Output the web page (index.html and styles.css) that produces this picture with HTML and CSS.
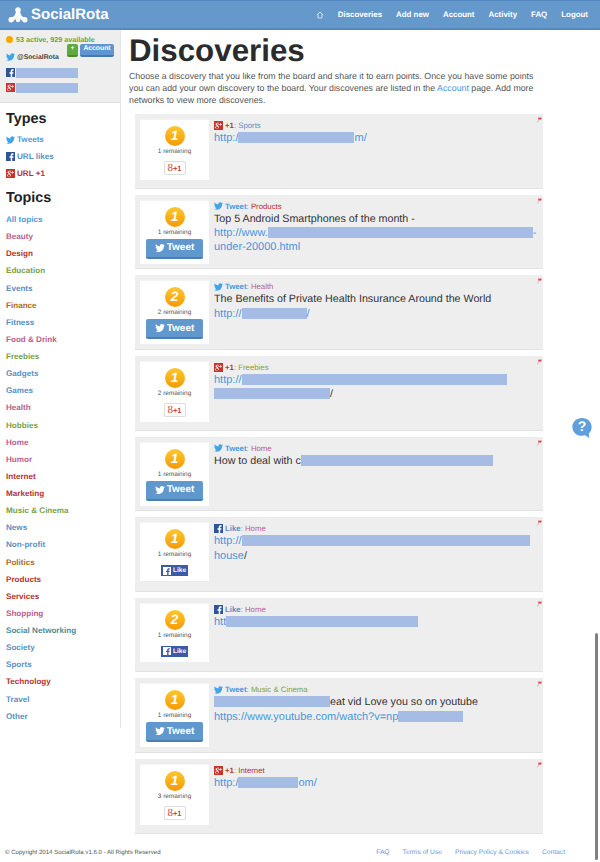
FILE: index.html
```html
<!DOCTYPE html>
<html lang="en">
<head>
<meta charset="utf-8">
<title>Discoveries - SocialRota</title>
<link rel="stylesheet" href="styles.css">
</head>
<body>
<svg class="defs" width="0" height="0" aria-hidden="true">
  <symbol id="tw" viewBox="0 0 24 20"><path d="M24 2.4c-.9.4-1.8.7-2.8.8 1-.6 1.8-1.6 2.2-2.7-1 .6-2 1-3.100 1.200C19.300.7 18 0 16.600 0c-2.700 0-4.900 2.200-4.900 4.900 0 .4 0 .8.100 1.100C7.700 5.800 4.100 3.900 1.700.9 1.200 1.600 1 2.500 1 3.400c0 1.700.9 3.200 2.200 4.100-.8 0-1.600-.2-2.200-.6v.1c0 2.400 1.700 4.400 3.900 4.800-.4.100-.8.200-1.300.2-.3 0-.6 0-.9-.1.600 2 2.400 3.400 4.600 3.400C5.600 17.100 3.500 17.900 1.200 17.900c-.4 0-.8 0-1.200-.1 2.200 1.400 4.800 2.200 7.500 2.200 9.100 0 14-7.500 14-14v-.6c1-.7 1.800-1.600 2.500-3z"/></symbol>
  <symbol id="fb" viewBox="0 0 16 16"><rect width="16" height="16" fill="#2f5597"/><path fill="#fff" d="M11 16V10h2l.4-2.500H11V6c0-.8.3-1.200 1.200-1.200h1.300V2.500C13 2.400 12.300 2.400 11.600 2.400 9.700 2.400 8.400 3.500 8.400 5.600v1.900H6.200V10h2.200v6z"/></symbol>
  <symbol id="fbw" viewBox="0 0 16 16"><rect width="16" height="16" fill="#fff"/><path fill="#3a5ba8" d="M11 16V10h2l.4-2.500H11V6c0-.8.3-1.200 1.200-1.200h1.300V2.500C13 2.400 12.300 2.400 11.600 2.400 9.700 2.400 8.400 3.500 8.400 5.600v1.900H6.200V10h2.200v6z"/></symbol>
  <symbol id="gp" viewBox="0 0 16 16"><rect width="16" height="16" fill="#c8342b"/><path fill="#fff" d="M6 3c-2 0-3.200 1.300-3.200 2.800 0 1.300 1 2.300 2.300 2.300-.2.500 0 .9.300 1.200-1.800 0-3.400.9-3.400 2.300 0 1.200 1.400 1.900 3.200 1.900 2.200 0 3.500-1.300 3.500-2.500 0-1.700-1.900-2-1.900-2.900 0-.7 1.500-1 1.500-2.700 0-.8-.3-1.300-.8-1.700h.9L9.300 3zm-.2.800c.9 0 1.500 1 1.500 2.100 0 .8-.4 1.300-1.100 1.300-1 0-1.500-1.100-1.500-2.100 0-.8.400-1.300 1.100-1.300zm.1 6c1 .3 1.800.9 1.800 1.800 0 .9-.8 1.500-2 1.500-1.300 0-2.300-.7-2.300-1.700 0-.9 1.100-1.600 2.500-1.600zM11 3.500v2H9v1h2v2h1v-2h2v-1h-2v-2z"/></symbol>
  <symbol id="pin" viewBox="0 0 8 8"><path fill="#e04848" d="M2.500 1 7.500.6 7 3.400 3.500 3.800z"/><path fill="#b9a08c" d="M3.500 3.800 1 7.500l.4.300 3-3.800z"/></symbol>
</svg>

<header class="topbar">
  <a class="brand" href="#">
    <svg class="logo" viewBox="0 0 22 18" aria-hidden="true"><g fill="#fff"><circle cx="11" cy="3.400" r="3.100"/><circle cx="3.300" cy="14.300" r="3"/><circle cx="18.700" cy="14.300" r="3"/><circle cx="11" cy="14.800" r="2.400"/><path d="M9 5h4l2.200 5 3.500 2.500-2 3-4.700-2.500h-2L5.300 15.500l-2-3L6.800 10z"/></g></svg>
    <span>SocialRota</span>
  </a>
  <nav class="nav">
    <a href="#" class="home"><svg viewBox="0 0 10 10" aria-hidden="true"><path fill="none" stroke="#e8f0f8" stroke-width="1" d="M1 5 5 1.200 9 5M2.500 4v4.700h5V4"/></svg></a>
    <a href="#">Discoveries</a><a href="#">Add new</a><a href="#">Account</a><a href="#">Activity</a><a href="#">FAQ</a><a href="#">Logout</a>
  </nav>
</header>

<div class="page">
  <aside class="side">
    <section class="profile">
      <div class="points"><i class="coin"></i><span>53 active, 929 available</span></div>
      <div class="acct-row">
        <svg class="ic ic-tw"><use href="#tw"/></svg><b>@SocialRota</b>
        <div class="acct-btns"><a class="mini green" href="#">+</a><a class="mini blue" href="#">Account</a></div>
      </div>
      <div class="net"><svg class="ic-sq"><use href="#fb"/></svg><span class="blk"></span></div>
      <div class="net"><svg class="ic-sq"><use href="#gp"/></svg><span class="blk"></span></div>
    </section>
    <section class="filters">
      <h2>Types</h2>
      <ul class="types">
        <li><svg class="ic ic-tw"><use href="#tw"/></svg><a class="c-sky" href="#">Tweets</a></li>
        <li><svg class="ic-sq"><use href="#fb"/></svg><a class="c-blue" href="#">URL likes</a></li>
        <li><svg class="ic-sq"><use href="#gp"/></svg><a class="c-red" href="#">URL +1</a></li>
      </ul>
      <h2 class="h-topics">Topics</h2>
      <ul class="topics">
        <li><a class="c-sky" href="#">All topics</a></li>
        <li><a class="c-pink" href="#">Beauty</a></li>
        <li><a class="c-red" href="#">Design</a></li>
        <li><a class="c-green" href="#">Education</a></li>
        <li><a class="c-blue" href="#">Events</a></li>
        <li><a class="c-orange" href="#">Finance</a></li>
        <li><a class="c-blue" href="#">Fitness</a></li>
        <li><a class="c-pink" href="#">Food &amp; Drink</a></li>
        <li><a class="c-green" href="#">Freebies</a></li>
        <li><a class="c-blue" href="#">Gadgets</a></li>
        <li><a class="c-blue" href="#">Games</a></li>
        <li><a class="c-pink" href="#">Health</a></li>
        <li><a class="c-green" href="#">Hobbies</a></li>
        <li><a class="c-pink" href="#">Home</a></li>
        <li><a class="c-pink" href="#">Humor</a></li>
        <li><a class="c-red" href="#">Internet</a></li>
        <li><a class="c-red" href="#">Marketing</a></li>
        <li><a class="c-green" href="#">Music &amp; Cinema</a></li>
        <li><a class="c-blue" href="#">News</a></li>
        <li><a class="c-blue" href="#">Non-profit</a></li>
        <li><a class="c-orange" href="#">Politics</a></li>
        <li><a class="c-red" href="#">Products</a></li>
        <li><a class="c-red" href="#">Services</a></li>
        <li><a class="c-pink" href="#">Shopping</a></li>
        <li><a class="c-teal" href="#">Social Networking</a></li>
        <li><a class="c-blue" href="#">Society</a></li>
        <li><a class="c-blue" href="#">Sports</a></li>
        <li><a class="c-red" href="#">Technology</a></li>
        <li><a class="c-blue" href="#">Travel</a></li>
        <li><a class="c-blue" href="#">Other</a></li>
      </ul>
    </section>
  </aside>

  <main class="main">
    <h1>Discoveries</h1>
    <p class="intro">Choose a discovery that you like from the board and share it to earn points. Once you have some points you can add your own discovery to the board. Your discoveries are listed in the <a href="#">Account</a> page. Add more networks to view more discoveries.</p>

    <div class="board">
      <article class="card">
        <div class="claim"><span class="badge">1</span><small>1 remaining</small><a class="plus" href="#"><b>8</b>+1</a></div>
        <div class="body">
          <div class="meta"><svg class="ic-sq"><use href="#gp"/></svg><b class="c-red">+1</b>: <span class="c-blue">Sports</span></div>
          <div class="line"><a href="#">http:/<span class="blk w116"></span>m/</a></div>
        </div>
        <svg class="pin"><use href="#pin"/></svg>
      </article>

      <article class="card">
        <div class="claim"><span class="badge">1</span><small>1 remaining</small><a class="tweet" href="#"><svg><use href="#tw"/></svg>Tweet</a></div>
        <div class="body">
          <div class="meta"><svg class="ic ic-tw"><use href="#tw"/></svg><b class="c-sky">Tweet</b>: <span class="c-red">Products</span></div>
          <div class="line">Top 5 Android Smartphones of the month -</div>
          <div class="line"><a href="#">http://www.<span class="blk w265"></span>-</a></div>
          <div class="line"><a href="#">under-20000.html</a></div>
        </div>
        <svg class="pin"><use href="#pin"/></svg>
      </article>

      <article class="card">
        <div class="claim"><span class="badge">2</span><small>2 remaining</small><a class="tweet" href="#"><svg><use href="#tw"/></svg>Tweet</a></div>
        <div class="body">
          <div class="meta"><svg class="ic ic-tw"><use href="#tw"/></svg><b class="c-sky">Tweet</b>: <span class="c-pink">Health</span></div>
          <div class="line">The Benefits of Private Health Insurance Around the World</div>
          <div class="line"><a href="#">http://<span class="blk w65"></span>/</a></div>
        </div>
        <svg class="pin"><use href="#pin"/></svg>
      </article>

      <article class="card">
        <div class="claim"><span class="badge">1</span><small>2 remaining</small><a class="plus" href="#"><b>8</b>+1</a></div>
        <div class="body">
          <div class="meta"><svg class="ic-sq"><use href="#gp"/></svg><b class="c-red">+1</b>: <span class="c-green">Freebies</span></div>
          <div class="line"><a href="#">http://<span class="blk w265"></span></a></div>
          <div class="line"><span class="blk w116"></span>/</div>
        </div>
        <svg class="pin"><use href="#pin"/></svg>
      </article>

      <article class="card">
        <div class="claim"><span class="badge">1</span><small>1 remaining</small><a class="tweet" href="#"><svg><use href="#tw"/></svg>Tweet</a></div>
        <div class="body">
          <div class="meta"><svg class="ic ic-tw"><use href="#tw"/></svg><b class="c-sky">Tweet</b>: <span class="c-pink">Home</span></div>
          <div class="line">How to deal with c<span class="blk w192"></span></div>
        </div>
        <svg class="pin"><use href="#pin"/></svg>
      </article>

      <article class="card">
        <div class="claim"><span class="badge">1</span><small>1 remaining</small><a class="like" href="#"><svg><use href="#fbw"/></svg>Like</a></div>
        <div class="body">
          <div class="meta"><svg class="ic-sq"><use href="#fb"/></svg><b class="c-blue">Like</b>: <span class="c-pink">Home</span></div>
          <div class="line"><a href="#">http://<span class="blk w288"></span></a></div>
          <div class="line"><a href="#">house</a>/</div>
        </div>
        <svg class="pin"><use href="#pin"/></svg>
      </article>

      <article class="card">
        <div class="claim"><span class="badge">2</span><small>1 remaining</small><a class="like" href="#"><svg><use href="#fbw"/></svg>Like</a></div>
        <div class="body">
          <div class="meta"><svg class="ic-sq"><use href="#fb"/></svg><b class="c-blue">Like</b>: <span class="c-pink">Home</span></div>
          <div class="line"><a href="#">htt<span class="blk w192"></span></a></div>
        </div>
        <svg class="pin"><use href="#pin"/></svg>
      </article>

      <article class="card">
        <div class="claim"><span class="badge">1</span><small>1 remaining</small><a class="tweet" href="#"><svg><use href="#tw"/></svg>Tweet</a></div>
        <div class="body">
          <div class="meta"><svg class="ic ic-tw"><use href="#tw"/></svg><b class="c-sky">Tweet</b>: <span class="c-green">Music &amp; Cinema</span></div>
          <div class="line"><span class="blk w116"></span>eat vid Love you so on youtube</div>
          <div class="line"><a href="#">https://www.youtube.com/watch?v=np<span class="blk w65"></span></a></div>
        </div>
        <svg class="pin"><use href="#pin"/></svg>
      </article>

      <article class="card">
        <div class="claim"><span class="badge">1</span><small>3 remaining</small><a class="plus" href="#"><b>8</b>+1</a></div>
        <div class="body">
          <div class="meta"><svg class="ic-sq"><use href="#gp"/></svg><b class="c-red">+1</b>: <span class="c-red">Internet</span></div>
          <div class="line"><a href="#">http:/<span class="blk w60"></span>om/</a></div>
        </div>
        <svg class="pin"><use href="#pin"/></svg>
      </article>
    </div>
  </main>
</div>

<footer class="foot">
  <span>© Copyright 2014 SocialRota v1.6.0 - All Rights Reserved</span>
  <nav><a href="#">FAQ</a><a href="#">Terms of Use</a><a href="#">Privacy Policy &amp; Cookies</a><a href="#">Contact</a></nav>
</footer>

<a class="help" href="#" aria-label="Help">
  <svg viewBox="0 0 24 24"><path fill="#5f9fdc" d="M12 1C5.900 1 1.500 5.200 1.500 10.800S5.900 20.500 12 20.500c1.200 0 2.300-.2 3.300-.5l4.700 3-.6-4.900c2-1.800 3.100-4.300 3.100-7.300C22.500 5.200 18.100 1 12 1z"/></svg><b>?</b>
</a>
<div class="scroll"></div>
</body>
</html>
```

FILE: styles.css
```css
* { box-sizing: border-box; }
html, body { margin: 0; padding: 0; }
body {
  position: relative;
  width: 600px;
  height: 862px;
  overflow: hidden;
  background: #fff;
  color: #333;
  font-family: "Liberation Sans", Arial, sans-serif;
  font-size: 10.5px;
  text-rendering: geometricPrecision;
}
a { text-decoration: none; color: #4a95dc; }
ul { list-style: none; margin: 0; padding: 0; }
.defs { position: absolute; }

.c-sky { color: #4a9bdc; }
.c-blue { color: #5b8fc4; }
.c-red { color: #b8322c; }
.c-pink { color: #b8608c; }
.c-green { color: #7ba23f; }
.c-orange { color: #ad6a1e; }
.c-teal { color: #4e8c96; }

.ic { display: inline-block; fill: #3fa4e8; }
.ic-tw { width: 9px; height: 8px; margin-right: 2px; }
.ic-sq { display: inline-block; width: 9px; height: 9px; margin-right: 2px; }

.blk { display: inline-block; height: 11px; background: #a5bce5; vertical-align: -2px; }
.w60 { width: 60px; }
.w65 { width: 65px; }
.w116 { width: 116px; }
.w192 { width: 192px; }
.w265 { width: 265px; }
.w288 { width: 288px; }

.topbar {
  height: 30px;
  display: flex;
  align-items: center;
  justify-content: space-between;
  padding: 0 12px 0 8px;
  background: #6699cb;
  border-top: 1px solid #5188c0;
  border-bottom: 2px solid #5588bd;
}
.brand { display: flex; align-items: center; gap: 3px; color: #fff; font-size: 15px; font-weight: bold; }
.logo { width: 20px; height: 16px; }
.nav { display: flex; align-items: center; gap: 14px; }
.nav a { color: #fff; font-size: 7.9px; font-weight: bold; }
.nav .home { display: flex; }
.home svg { width: 8px; height: 8px; }

.page { display: flex; align-items: flex-start; }
.side { flex: none; width: 121px; height: 698px; border-right: 1px solid #e3e3e3; }
.profile {
  height: 73px;
  padding: 5px 0 0 6px;
  background: #eee;
  border-bottom: 1px solid #ddd;
  font-size: 7.4px;
}
.points { display: flex; align-items: center; gap: 3px; color: #60a840; font-weight: bold; font-size: 7.2px; }
.coin { width: 7px; height: 7px; border-radius: 50%; background: #f7a800; }
.acct-row { position: relative; display: flex; align-items: center; margin-top: 7px; height: 12px; }
.acct-row b { color: #444; font-size: 6.8px; }
.acct-btns { position: absolute; left: 61px; top: -7px; display: flex; gap: 2px; }
.mini {
  display: block;
  height: 13px;
  line-height: 10px;
  border-radius: 2px;
  color: #fff;
  font-weight: bold;
  font-size: 6.8px;
  text-align: center;
}
.mini.green { width: 11px; background: #5dab3c; border-bottom: 2px solid #4a8c2e; }
.mini.blue { width: 34px; background: #5f96cf; border-bottom: 2px solid #4678ae; }
.net { display: flex; align-items: center; height: 11px; margin-top: 4px; }
.net .ic-sq { margin-right: 1px; }
.net .blk { width: 62px; height: 10px; }

.filters { padding: 8px 0 0 6px; }
h2 { margin: 0; color: #222; font-size: 14.4px; font-weight: bold; line-height: 17px; }
.types { margin-top: 3px; }
.types li { display: flex; align-items: center; height: 17px; font-size: 8.1px; font-weight: bold; }
.types .ic-tw, .types .ic-sq { margin-right: 2px; }
.h-topics { margin-top: 8px; }
.topics { margin-top: 4px; }
.topics li { height: 17.14px; line-height: 17.14px; font-size: 8.1px; font-weight: bold; }

.main { flex: 1; min-width: 0; padding: 3px 0 0 8px; }
h1 { margin: 0; color: #2b2b2b; font-size: 31.3px; font-weight: bold; line-height: 35px; }
.intro { margin: 2px 0 0; width: 408px; color: #555; font-size: 8.8px; line-height: 12.1px; }

.board { display: flex; flex-direction: column; gap: 6px; width: 408px; margin: 8px 0 0 6px; }
.card {
  position: relative;
  display: flex;
  align-items: flex-start;
  height: 74.6px;
  padding: 5px;
  background: #eee;
  border-bottom: 1px solid #e2e2e2;
}
.claim {
  flex: none;
  display: flex;
  flex-direction: column;
  align-items: center;
  width: 69px;
  padding: 6px 0 5px;
  background: #fff;
  border-top: 1px solid #f4f4f4;
}
.badge {
  width: 20px;
  height: 20px;
  border-radius: 50%;
  background: linear-gradient(#fdc72e, #f59a05);
  color: #fff;
  font-style: italic;
  font-weight: bold;
  font-size: 13.5px;
  line-height: 20px;
  text-align: center;
}
.claim small { color: #555; font-size: 6.4px; line-height: 11px; margin-top: 0; }
.plus {
  display: block;
  width: 22px;
  height: 14px;
  margin-top: 4px;
  background: #fff;
  border: 1px solid #ddd;
  border-radius: 2px;
  color: #d04030;
  font-size: 7.5px;
  font-weight: bold;
  line-height: 12px;
  text-align: center;
}
.plus b { font-family: "Liberation Serif", serif; font-weight: normal; font-size: 11px; }
.tweet {
  display: flex;
  align-items: center;
  justify-content: center;
  gap: 2px;
  width: 57px;
  height: 20px;
  margin-top: 1px;
  background: #6097cd;
  border-bottom: 2px solid #4b7fb3;
  border-radius: 2px;
  color: #fff;
  font-size: 10px;
  font-weight: bold;
}
.tweet svg { width: 10px; height: 8px; fill: #fff; }
.like {
  display: flex;
  align-items: center;
  justify-content: center;
  gap: 2px;
  width: 27px;
  height: 11px;
  margin-top: 5px;
  background: #3a5ba8;
  color: #fff;
  font-size: 6.5px;
  font-weight: bold;
}
.like svg { width: 8px; height: 8px; }
.body { flex: 1; min-width: 0; padding: 1px 0 0 5px; }
.meta { display: flex; align-items: center; height: 11px; color: #888; font-size: 7.8px; white-space: pre; }
.line { color: #333; font-size: 10.7px; line-height: 14.3px; white-space: nowrap; }
.line a { font-size: 11px; }
.pin { position: absolute; right: 1px; top: 3px; width: 6px; height: 6px; }

.foot {
  position: absolute;
  left: 0;
  right: 0;
  top: 849px;
  display: flex;
  justify-content: space-between;
  padding: 0 35px 0 5px;
  color: #555;
  font-size: 6.1px;
}
.foot nav { display: flex; gap: 13px; }
.foot a { color: #5b9ade; font-size: 6.7px; }

.help { position: absolute; left: 571px; top: 416px; width: 22px; height: 24px; }
.help svg { display: block; width: 100%; height: 100%; }
.help b {
  position: absolute;
  left: 0;
  right: 0;
  top: 2px;
  color: #fff;
  font-size: 14px;
  line-height: 16px;
  text-align: center;
}
.scroll { position: absolute; left: 595px; top: 633px; width: 3px; height: 227px; border-radius: 2px; background: #808080; }
```
